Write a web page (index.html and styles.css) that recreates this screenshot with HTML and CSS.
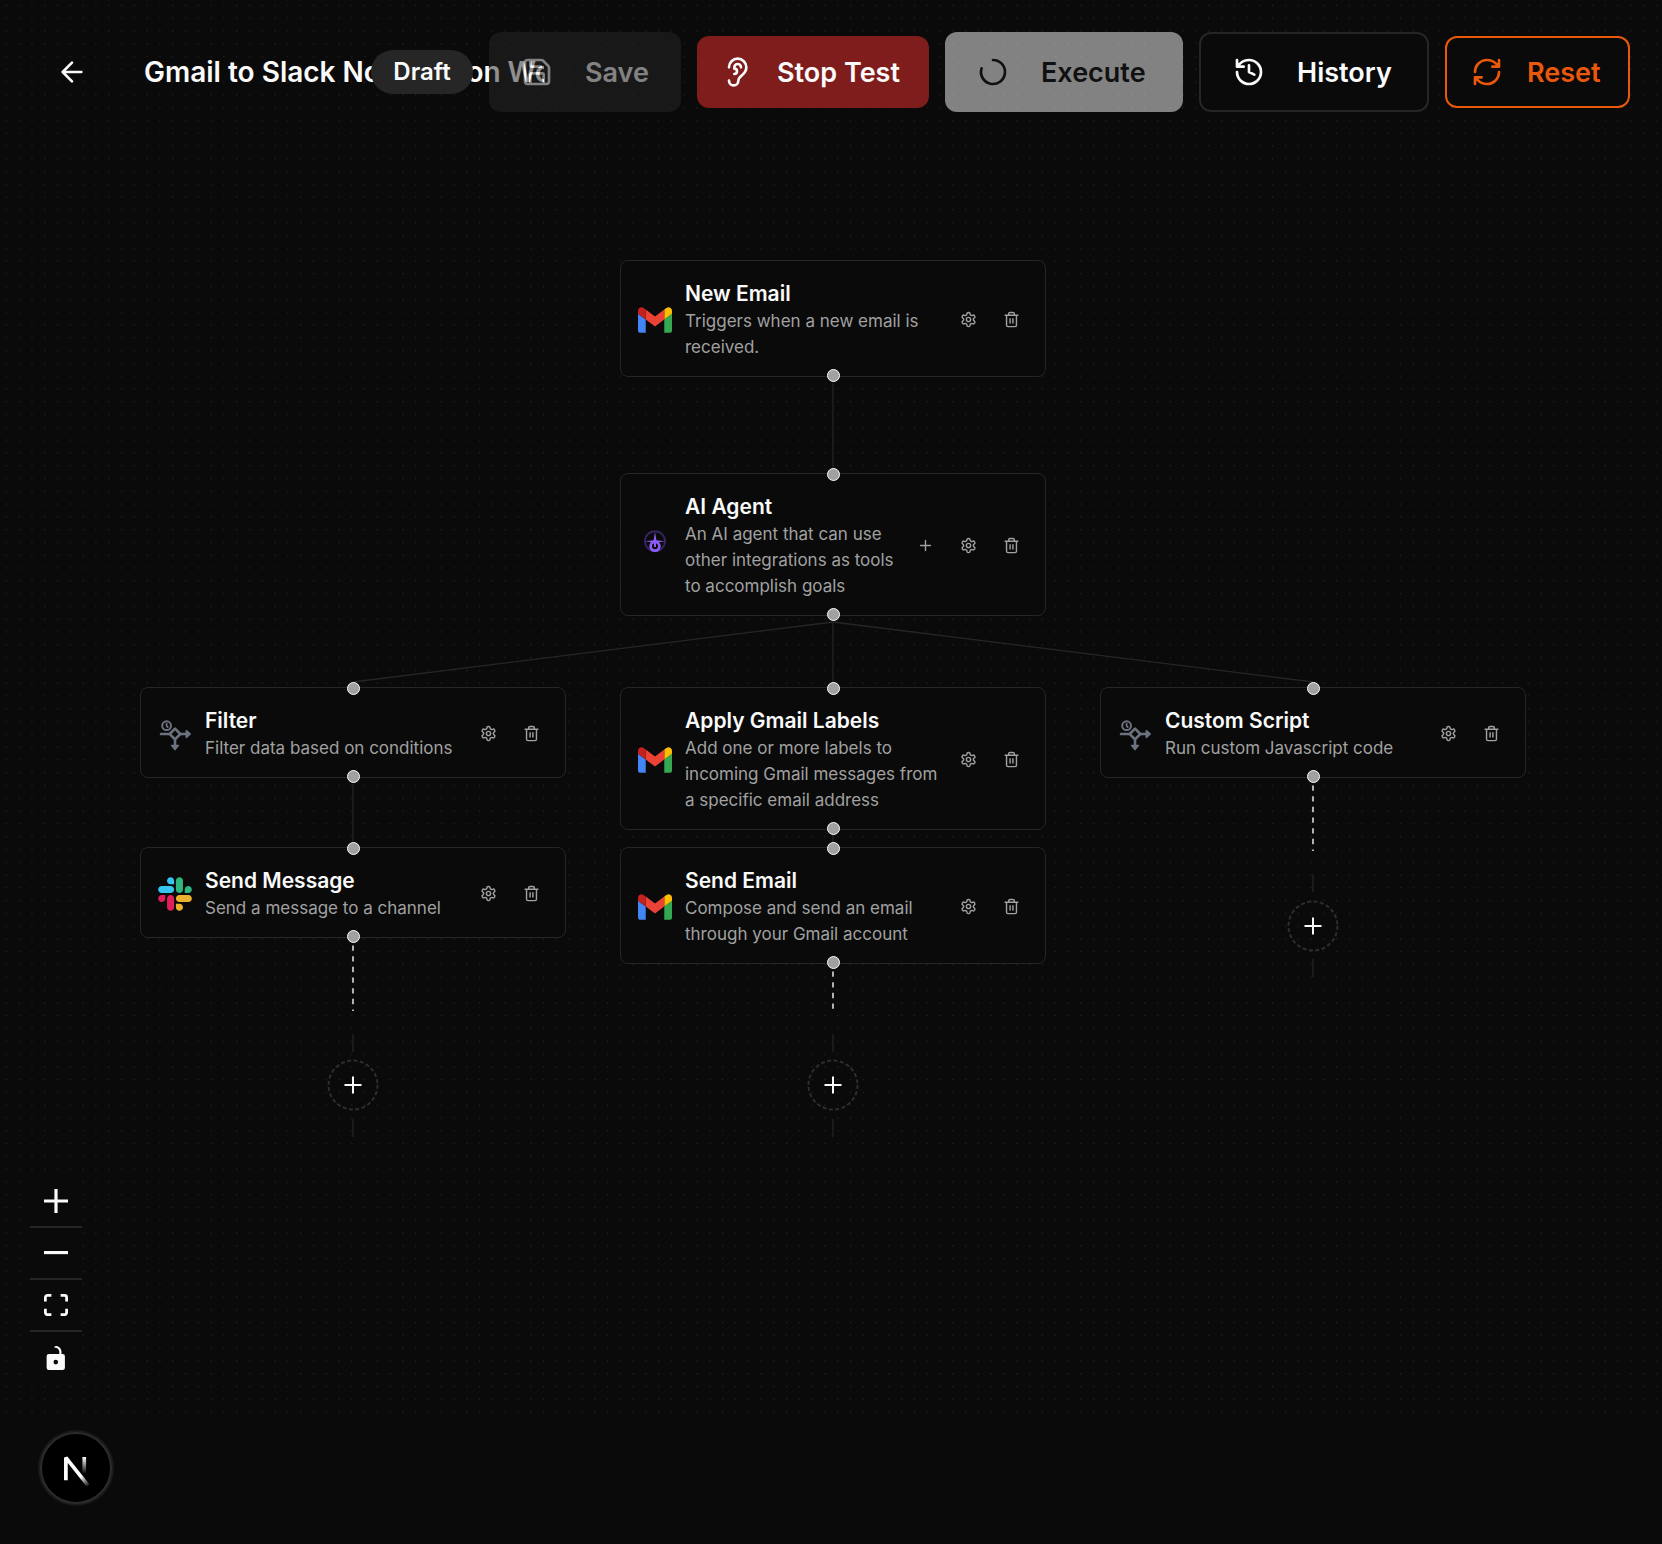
FILE: index.html
```html
<!DOCTYPE html>
<html lang="en">
<head>
<meta charset="utf-8">
<title>Gmail to Slack Notification Workflow</title>
<link rel="stylesheet" href="styles.css">
</head>
<body>
<svg class="defs" aria-hidden="true">
  <symbol id="gmail" viewBox="52 42 88 66">
    <path fill="#4285f4" d="M58 108h14V74L52 59v43c0 3.32 2.69 6 6 6"/>
    <path fill="#34a853" d="M120 108h14c3.32 0 6-2.69 6-6V59l-20 15"/>
    <path fill="#fbbc04" d="M120 48v26l20-15v-8c0-7.42-8.47-11.65-14.4-7.2"/>
    <path fill="#ea4335" d="M72 74V48l24 18 24-18v26L96 92"/>
    <path fill="#c5221f" d="M52 51v8l20 15V48l-5.6-4.2c-5.94-4.45-14.4-.22-14.4 7.2"/>
  </symbol>
  <symbol id="slack" viewBox="0 0 127 127">
    <path fill="#e01e5a" d="M27.2 80c0 7.3-5.9 13.2-13.2 13.2C6.7 93.2.8 87.3.8 80c0-7.3 5.9-13.2 13.2-13.2h13.2V80zm6.6 0c0-7.3 5.9-13.2 13.2-13.2 7.3 0 13.2 5.9 13.2 13.2v33c0 7.3-5.9 13.2-13.2 13.2-7.3 0-13.2-5.9-13.2-13.2V80z"/>
    <path fill="#36c5f0" d="M47 27c-7.3 0-13.2-5.9-13.2-13.2C33.8 6.5 39.7.6 47 .6c7.3 0 13.2 5.9 13.2 13.2V27H47zm0 6.7c7.3 0 13.2 5.9 13.2 13.2 0 7.3-5.9 13.2-13.2 13.2H13.9C6.6 60.1.7 54.2.7 46.9c0-7.3 5.9-13.2 13.2-13.2H47z"/>
    <path fill="#2eb67d" d="M99.9 46.9c0-7.3 5.9-13.2 13.2-13.2 7.3 0 13.2 5.9 13.2 13.2 0 7.3-5.9 13.2-13.2 13.2H99.9V46.9zm-6.6 0c0 7.3-5.9 13.2-13.2 13.2-7.3 0-13.2-5.9-13.2-13.2V13.8C66.9 6.5 72.8.6 80.1.6c7.3 0 13.2 5.9 13.2 13.2v33.1z"/>
    <path fill="#ecb22e" d="M80.1 99.8c7.3 0 13.2 5.9 13.2 13.2 0 7.3-5.9 13.2-13.2 13.2-7.3 0-13.2-5.9-13.2-13.2V99.8h13.2zm0-6.6c-7.3 0-13.2-5.9-13.2-13.2 0-7.3 5.9-13.2 13.2-13.2h33.1c7.3 0 13.2 5.9 13.2 13.2 0 7.3-5.9 13.2-13.2 13.2H80.1z"/>
  </symbol>
  <symbol id="branch" viewBox="0 0 34 34">
    <g fill="none" stroke="#6b7280" stroke-width="2.6">
      <circle cx="8.6" cy="8.7" r="4.4" stroke-width="2"/>
      <path d="M8.6 6v3l1.8 1.6" stroke-width="1.7"/>
      <path d="M3 17h8.5M22.5 17H29M17 22.5V29" stroke-linecap="round"/>
      <path d="M17 11.7l5.3 5.3-5.3 5.3-5.3-5.3z" stroke-linejoin="round"/>
    </g>
    <path fill="#6b7280" stroke="#6b7280" stroke-width="1.6" stroke-linejoin="round" d="M28.3 13.7l4 3.3-4 3.3zM13.7 28.600l3.300 4 3.300-4z"/>
  </symbol>
  <symbol id="agent" viewBox="0 0 34 34">
    <circle cx="17" cy="12.2" r="10" fill="none" stroke="#35245f" stroke-width="2"/>
    <path fill="#8b5cf6" d="M17 2.800l1.400 8.500 8.600 1-8.600 1.200L17 18l-1.400-4.500-8.600-1.200 8.600-1z"/>
    <circle cx="17" cy="17.300" r="4.400" fill="none" stroke="#8b5cf6" stroke-width="2.800"/>
    <path stroke="#8b5cf6" stroke-width="2" d="M17 12v6"/>
  </symbol>
  <symbol id="gear" viewBox="0 0 24 24">
    <path d="M12.22 2h-.44a2 2 0 0 0-2 2v.18a2 2 0 0 1-1 1.730l-.43.25a2 2 0 0 1-2 0l-.15-.08a2 2 0 0 0-2.73.73l-.22.38a2 2 0 0 0 .73 2.73l.15.1a2 2 0 0 1 1 1.720v.51a2 2 0 0 1-1 1.740l-.15.09a2 2 0 0 0-.73 2.73l.22.38a2 2 0 0 0 2.73.73l.15-.08a2 2 0 0 1 2 0l.43.25a2 2 0 0 1 1 1.730V20a2 2 0 0 0 2 2h.44a2 2 0 0 0 2-2v-.18a2 2 0 0 1 1-1.730l.43-.25a2 2 0 0 1 2 0l.15.08a2 2 0 0 0 2.73-.73l.22-.39a2 2 0 0 0-.73-2.730l-.15-.08a2 2 0 0 1-1-1.740v-.5a2 2 0 0 1 1-1.740l.15-.09a2 2 0 0 0 .73-2.730l-.22-.38a2 2 0 0 0-2.730-.73l-.15.08a2 2 0 0 1-2 0l-.43-.25a2 2 0 0 1-1-1.730V4a2 2 0 0 0-2-2z"/>
    <circle cx="12" cy="12" r="3"/>
  </symbol>
  <symbol id="trash" viewBox="0 0 24 24">
    <path d="M3 6h18M19 6v14c0 1-1 2-2 2H7c-1 0-2-1-2-2V6M8 6V4c0-1 1-2 2-2h4c1 0 2 1 2 2v2M10 11v6M14 11v6"/>
  </symbol>
  <symbol id="plus" viewBox="0 0 24 24"><path d="M5 12h14M12 5v14"/></symbol>
</svg>

<main class="page">
  <section class="canvas" aria-label="Workflow">
    <svg class="dots" aria-hidden="true">
      <pattern id="grid" x="5.800" y="4.600" width="12.790" height="12.790" patternUnits="userSpaceOnUse">
        <circle cx=".64" cy=".64" r=".64" fill="#2a2a2a"/>
      </pattern>
      <rect width="100%" height="100%" fill="url(#grid)"/>
    </svg>

    <svg class="edges" aria-hidden="true">
      <g class="edge">
        <path d="M833 383v85M833 622v60M833 622L353 682M833 622l480 60M353 784v57M833 828v20"/>
        <path d="M353 1034v18M353 1119v18M833 1034v18M833 1119v18M1313 874v18M1313 959v18"/>
      </g>
      <g class="edge-pending">
        <path d="M353 945.500V1011"/>
        <path d="M833 971.500V1011"/>
        <path d="M1313 785.500V851"/>
      </g>
    </svg>

    <article class="node n-new">
      <svg class="logo"><use href="#gmail"/></svg>
      <div class="copy"><h2>New Email</h2><p>Triggers when a new email is<br>received.</p></div>
      <div class="actions">
        <button aria-label="Settings"><svg><use href="#gear"/></svg></button>
        <button aria-label="Delete"><svg><use href="#trash"/></svg></button>
      </div>
      <i class="port out"></i>
    </article>

    <article class="node n-agent">
      <svg class="logo"><use href="#agent"/></svg>
      <div class="copy"><h2>AI Agent</h2><p>An AI agent that can use<br>other integrations as tools<br>to accomplish goals</p></div>
      <div class="actions">
        <button aria-label="Add tool"><svg><use href="#plus"/></svg></button>
        <button aria-label="Settings"><svg><use href="#gear"/></svg></button>
        <button aria-label="Delete"><svg><use href="#trash"/></svg></button>
      </div>
      <i class="port in"></i><i class="port out"></i>
    </article>

    <article class="node n-filter">
      <svg class="logo"><use href="#branch"/></svg>
      <div class="copy"><h2>Filter</h2><p>Filter data based on conditions</p></div>
      <div class="actions">
        <button aria-label="Settings"><svg><use href="#gear"/></svg></button>
        <button aria-label="Delete"><svg><use href="#trash"/></svg></button>
      </div>
      <i class="port in"></i><i class="port out"></i>
    </article>

    <article class="node n-labels">
      <svg class="logo"><use href="#gmail"/></svg>
      <div class="copy"><h2>Apply Gmail Labels</h2><p>Add one or more labels to<br>incoming Gmail messages from<br>a specific email address</p></div>
      <div class="actions">
        <button aria-label="Settings"><svg><use href="#gear"/></svg></button>
        <button aria-label="Delete"><svg><use href="#trash"/></svg></button>
      </div>
      <i class="port in"></i><i class="port out"></i>
    </article>

    <article class="node n-script">
      <svg class="logo"><use href="#branch"/></svg>
      <div class="copy"><h2>Custom Script</h2><p>Run custom Javascript code</p></div>
      <div class="actions">
        <button aria-label="Settings"><svg><use href="#gear"/></svg></button>
        <button aria-label="Delete"><svg><use href="#trash"/></svg></button>
      </div>
      <i class="port in"></i><i class="port out"></i>
    </article>

    <article class="node n-message">
      <svg class="logo"><use href="#slack"/></svg>
      <div class="copy"><h2>Send Message</h2><p>Send a message to a channel</p></div>
      <div class="actions">
        <button aria-label="Settings"><svg><use href="#gear"/></svg></button>
        <button aria-label="Delete"><svg><use href="#trash"/></svg></button>
      </div>
      <i class="port in"></i><i class="port out"></i>
    </article>

    <article class="node n-send">
      <svg class="logo"><use href="#gmail"/></svg>
      <div class="copy"><h2>Send Email</h2><p>Compose and send an email<br>through your Gmail account</p></div>
      <div class="actions">
        <button aria-label="Settings"><svg><use href="#gear"/></svg></button>
        <button aria-label="Delete"><svg><use href="#trash"/></svg></button>
      </div>
      <i class="port in"></i><i class="port out"></i>
    </article>

    <button class="add a-left" aria-label="Add step"><svg viewBox="0 0 52 52"><circle cx="26" cy="26" r="24.500"/><path d="M17.500 26h17M26 17.500v17"/></svg></button>
    <button class="add a-mid" aria-label="Add step"><svg viewBox="0 0 52 52"><circle cx="26" cy="26" r="24.500"/><path d="M17.500 26h17M26 17.500v17"/></svg></button>
    <button class="add a-right" aria-label="Add step"><svg viewBox="0 0 52 52"><circle cx="26" cy="26" r="24.500"/><path d="M17.500 26h17M26 17.500v17"/></svg></button>

    <div class="controls">
      <button aria-label="Zoom in"><svg viewBox="0 0 32 32"><path d="M32 18.133H18.133V32h-4.266V18.133H0v-4.266h13.867V0h4.266v13.867H32z"/></svg></button>
      <button aria-label="Zoom out"><svg viewBox="0 0 32 5"><path d="M0 0h32v4.200H0z"/></svg></button>
      <button aria-label="Fit view"><svg viewBox="0 0 32 30"><path d="M3.692 4.630c0-.53.4-.938.939-.938h5.215V0H4.708C2.130 0 0 2.054 0 4.630v5.216h3.692V4.631zM27.354 0h-5.200v3.692h5.170c.53 0 .984.4.984.939v5.215H32V4.631A4.624 4.624 0 0027.354 0zm.954 24.830c0 .532-.4.940-.939.940h-5.215v3.768h5.215c2.577 0 4.631-2.130 4.631-4.707v-5.139h-3.692v5.139zm-23.677.940c-.531 0-.939-.4-.939-.940v-5.138H0v5.139c0 2.577 2.130 4.707 4.708 4.707h5.138V25.770H4.631z"/></svg></button>
      <button aria-label="Toggle lock"><svg viewBox="0 0 25 32"><path d="M21.333 10.667H19.810V7.619C19.810 3.429 16.380 0 12.190 0c-4.114 1.828-1.370 2.133.305 2.438 1.676.305 4.420 2.590 4.420 5.181v3.048H3.047A3.056 3.056 0 000 13.714v15.238A3.056 3.056 0 003.048 32h18.285a3.056 3.056 0 003.048-3.048V13.714a3.056 3.056 0 00-3.048-3.047zM12.190 24.533a3.056 3.056 0 01-3.047-3.047 3.056 3.056 0 013.047-3.048 3.056 3.056 0 013.048 3.048 3.056 3.056 0 01-3.048 3.047z"/></svg></button>
    </div>
  </section>

  <header class="topbar">
    <div class="heading">
      <button class="back" aria-label="Back"><svg viewBox="0 0 24 24"><path d="M12 19l-7-7 7-7M19 12H5"/></svg></button>
      <input class="name" type="text" aria-label="Workflow name" value="Gmail to Slack Notification Workflow">
    </div>
    <div class="toolbar">
      <span class="badge">Draft</span>
      <button class="btn tall save" disabled>
        <svg viewBox="0 0 24 24"><path d="M15.200 3a2 2 0 0 1 1.400.6l3.800 3.800a2 2 0 0 1 .6 1.400V19a2 2 0 0 1-2 2H5a2 2 0 0 1-2-2V5a2 2 0 0 1 2-2zM17 21v-7a1 1 0 0 0-1-1H8a1 1 0 0 0-1 1v7M7 3v4a1 1 0 0 0 1 1h7"/></svg>Save</button>
      <button class="btn stop">
        <svg viewBox="0 0 24 24"><path d="M6 8.500a6.500 6.500 0 1 1 13 0c0 6-6 6-6 10a3.500 3.500 0 1 1-7 0M15 8.500a2.500 2.500 0 0 0-5 0v1a2 2 0 1 1 0 4"/></svg>Stop Test</button>
      <button class="btn tall execute" disabled>
        <svg viewBox="0 0 24 24"><path transform="rotate(-90 12 12)" d="M21 12a9 9 0 1 1-6.219-8.560"/></svg>Execute</button>
      <button class="btn tall history">
        <svg viewBox="0 0 24 24"><path d="M3 12a9 9 0 1 0 9-9 9.750 9.750 0 0 0-6.740 2.740L3 8M3 3v5h5M12 7v5l4 2"/></svg>History</button>
      <button class="btn reset">
        <svg viewBox="0 0 24 24"><path d="M3 12a9 9 0 0 1 9-9 9.750 9.750 0 0 1 6.740 2.740L21 8M21 3v5h-5M21 12a9 9 0 0 1-9 9 9.750 9.750 0 0 1-6.740-2.740L3 16M8 16H3v5"/></svg>Reset</button>
    </div>
  </header>

  <button class="devtools" aria-label="Open developer tools">
    <svg viewBox="0 0 72 72">
      <defs>
        <linearGradient id="fadeA" gradientUnits="userSpaceOnUse" x1="9.900" y1="10.800" x2="14" y2="16"><stop stop-color="#fff"/><stop offset="1" stop-color="#fff" stop-opacity="0"/></linearGradient>
        <linearGradient id="fadeB" gradientUnits="userSpaceOnUse" x1="11.800" y1="1" x2="11.900" y2="9.500"><stop stop-color="#fff"/><stop offset="1" stop-color="#fff" stop-opacity="0"/></linearGradient>
      </defs>
      <g transform="translate(20.600 23) scale(2)" fill="none" stroke-width="1.860">
        <path stroke="url(#fadeA)" stroke-linejoin="bevel" d="M13.700 15.200L2.640 1.300V12.600"/>
        <path stroke="url(#fadeB)" d="M11.825 1v10"/>
      </g>
    </svg>
  </button>
</main>
</body>
</html>
```
FILE: styles.css
```css
* { box-sizing: border-box; }

body {
  margin: 0;
  background: #0a0a0a;
  color: #fafafa;
  font-family: Inter, "Open Sans", sans-serif;
}

button {
  margin: 0;
  padding: 0;
  border: 0;
  background: none;
  color: inherit;
  font: inherit;
}

.defs { position: absolute; width: 0; height: 0; }

.page {
  position: relative;
  display: flex;
  flex-direction: column;
  min-height: 100vh;
  padding-bottom: 128px;
}

.canvas {
  position: relative;
  flex: 1;
  min-height: 1200px;
  overflow: hidden;
}

.dots, .edges {
  position: absolute;
  inset: 0;
  width: 100%;
  height: 100%;
}

.edge { fill: none; stroke: #262626; stroke-width: 1.3px; }
.edge-pending { fill: none; stroke: #b1b1b7; stroke-width: 2px; stroke-dasharray: 5.3 5.37; }

/* top bar */
.topbar {
  position: absolute;
  top: 0;
  left: 0;
  right: 0;
  display: flex;
  align-items: center;
  height: 144px;
  padding: 0 32px;
}

.heading {
  display: flex;
  flex: 1 1 0;
  align-items: center;
  gap: 32px;
  min-width: 0;
}

.back {
  display: flex;
  flex: none;
  align-items: center;
  justify-content: center;
  width: 80px;
  height: 72px;
}

.back svg, .btn svg {
  flex: none;
  width: 32px;
  height: 32px;
  fill: none;
  stroke: currentColor;
  stroke-width: 2px;
  stroke-linecap: round;
  stroke-linejoin: round;
}

.name {
  flex: none;
  width: 400px;
  height: 56px;
  padding: 0;
  border: 0;
  outline: 0;
  background: transparent;
  color: #fafafa;
  font: 600 28px/56px Inter, "Open Sans", sans-serif;
}

.toolbar {
  position: relative;
  display: flex;
  flex: none;
  align-items: center;
  gap: 16px;
}

.badge {
  width: 102px;
  border-radius: 22px;
  background: #262626;
  font-size: 24px;
  font-weight: 600;
  line-height: 44px;
  text-align: center;
}

.btn {
  display: flex;
  align-items: center;
  gap: 24px;
  height: 72px;
  padding: 0 24px;
  border-radius: 12px;
  font-size: 27px;
  font-weight: 600;
  white-space: nowrap;
}

.btn.tall { gap: 32px; height: 80px; padding: 0 32px; }
.btn:disabled { opacity: 0.5; }

.save { width: 192px; background: #262626; color: #fafafa; }
.stop { width: 232px; background: #7f1d1d; }
.execute { width: 238px; background: #fafafa; color: #171717; }
.history { width: 230px; border: 2px solid #262626; background: #0a0a0a; }
.reset { width: 185px; border: 2px solid #ea580c; background: #0a0a0a; color: #ea580c; }

/* workflow nodes */
.node {
  position: absolute;
  display: flex;
  align-items: center;
  width: 426px;
  padding: 18px 17px 16px;
  border: 1px solid #262626;
  border-radius: 8px;
  background: #0a0a0a;
}

.n-new { left: 620px; top: 260px; }
.n-agent { left: 620px; top: 473px; }
.n-filter { left: 140px; top: 687px; }
.n-labels { left: 620px; top: 687px; }
.n-script { left: 1100px; top: 687px; }
.n-message { left: 140px; top: 847px; }
.n-send { left: 620px; top: 847px; }

.logo { flex: none; width: 34px; height: 34px; margin-right: 13px; }

.copy { flex: 1; min-width: 0; white-space: nowrap; }

.copy h2 {
  margin: 0;
  font-size: 21px;
  font-weight: 600;
  line-height: 29px;
}

.copy p {
  margin: 0;
  color: #a1a1a1;
  font-size: 17px;
  line-height: 26px;
}

.actions { display: flex; gap: 9px; color: #a1a1a1; }

.actions button {
  display: flex;
  align-items: center;
  justify-content: center;
  width: 34px;
  height: 34px;
}

.actions svg {
  width: 17px;
  height: 17px;
  fill: none;
  stroke: currentColor;
  stroke-width: 2px;
  stroke-linecap: round;
  stroke-linejoin: round;
}

.port {
  position: absolute;
  left: 50%;
  width: 13px;
  height: 13px;
  margin-left: -6px;
  border: 1px solid #fafafa;
  border-radius: 50%;
  background: #a1a1a1;
}

.port.in { top: -6px; }
.port.out { bottom: -6px; }

.add {
  position: absolute;
  width: 52px;
  height: 52px;
  border-radius: 50%;
}

.add svg { display: block; fill: none; }
.add circle { stroke: #2e2e2e; stroke-width: 2px; stroke-dasharray: 4 2.4; }
.add path { stroke: #fafafa; stroke-width: 2px; }

.a-left { left: 327px; top: 1059px; }
.a-mid { left: 807px; top: 1059px; }
.a-right { left: 1287px; top: 900px; }

/* viewport controls */
.controls {
  position: absolute;
  left: 30px;
  bottom: 32px;
  display: flex;
  flex-direction: column;
  width: 52px;
  background: #0a0a0a;
}

.controls button {
  display: flex;
  align-items: center;
  justify-content: center;
  height: 52px;
  border-bottom: 2px solid #262626;
}

.controls button:last-child { border-bottom: 0; }
.controls svg { width: 24px; max-height: 24px; fill: #fafafa; }

.devtools {
  position: absolute;
  left: 40px;
  bottom: 40px;
  width: 72px;
  height: 72px;
  border: 2px solid #2b2b2b;
  border-radius: 50%;
  background: #000;
  box-shadow: 0 0 0 2px #1a1a1a;
}

.devtools svg { display: block; width: 72px; height: 72px; margin: -2px; }
```
